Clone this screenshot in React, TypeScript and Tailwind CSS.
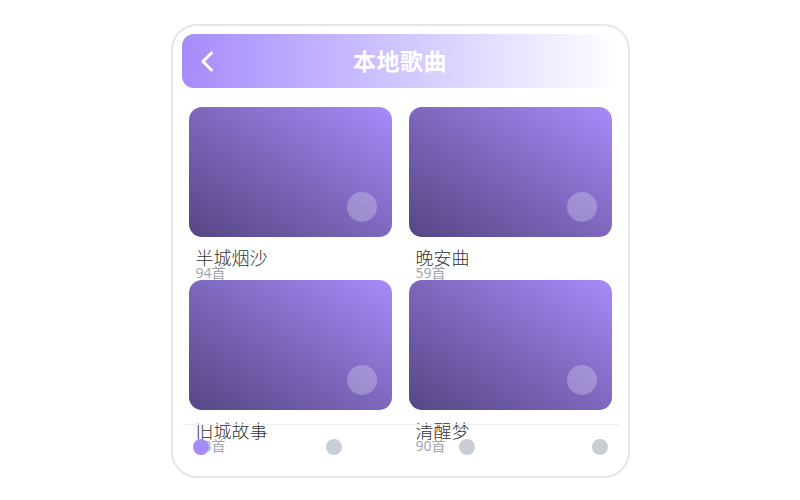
import React from "react";

type Album = { title: string; count: string };

const albums: Album[] = [
  { title: "半城烟沙", count: "94首" },
  { title: "晚安曲", count: "59首" },
  { title: "旧城故事", count: "83首" },
  { title: "清醒梦", count: "90首" },
];

const font = {
  fontFamily: '"Noto Sans", "Noto Sans CJK SC", sans-serif',
};

const AlbumCard = ({ album }: { album: Album }) => {
  return (
    <div className="h-[173px]">
      <div className="relative h-[130px] rounded-[13px] bg-linear-to-tr from-[#574684] to-[#a78bfa]">
        <div className="absolute right-[15px] bottom-[15px] w-[30px] h-[30px] rounded-full bg-white/25"></div>
      </div>
      <div className="px-[7px] mt-[12px]">
        <p className="text-[18px] leading-[18px] text-[#333333] font-light">{album.title}</p>
        <p className="text-[14px] leading-[14px] text-[#a3a6ad] mt-[-1px]">{album.count}</p>
      </div>
    </div>
  );
};

const App = () => {
  return (
    <div className="w-full h-[500px] flex justify-center pt-[24px] bg-white" style={font}>
      <div className="relative w-[459px] h-[454px] bg-white border-2 border-[#e6e6ea] rounded-[26px] overflow-hidden">
        <div className="relative mx-[9px] mt-[8px] h-[54px] rounded-[12px] bg-linear-to-r from-[#a78bfa] to-white flex items-center justify-center">
          <svg
            className="absolute left-[18px] top-[17px]"
            width="14"
            height="21"
            viewBox="0 0 14 21"
            fill="none"
            stroke="white"
            strokeWidth="3"
            strokeLinecap="round"
            strokeLinejoin="round"
          >
            <path d="M11.5 2 L3 10.5 L11.5 19" />
          </svg>
          <p className="text-[23px] font-bold text-white tracking-[0.5px]">本地歌曲</p>
        </div>

        <div className="grid grid-cols-2 gap-x-[17px] px-4 mt-[19px]">
          {albums.map((album) => (
            <AlbumCard key={album.title} album={album} />
          ))}
        </div>

        <div className="absolute left-[10px] right-[9px] bottom-0 h-[52px] border-t border-[#eceef1] px-[10px] pt-[14px] flex justify-between items-start">
          <div className="w-4 h-4 rounded-full bg-[#a78bfa]"></div>
          <div className="w-4 h-4 rounded-full bg-[#c9cdd4]"></div>
          <div className="w-4 h-4 rounded-full bg-[#c9cdd4]"></div>
          <div className="w-4 h-4 rounded-full bg-[#c9cdd4]"></div>
        </div>
      </div>
    </div>
  );
};

export default App;
